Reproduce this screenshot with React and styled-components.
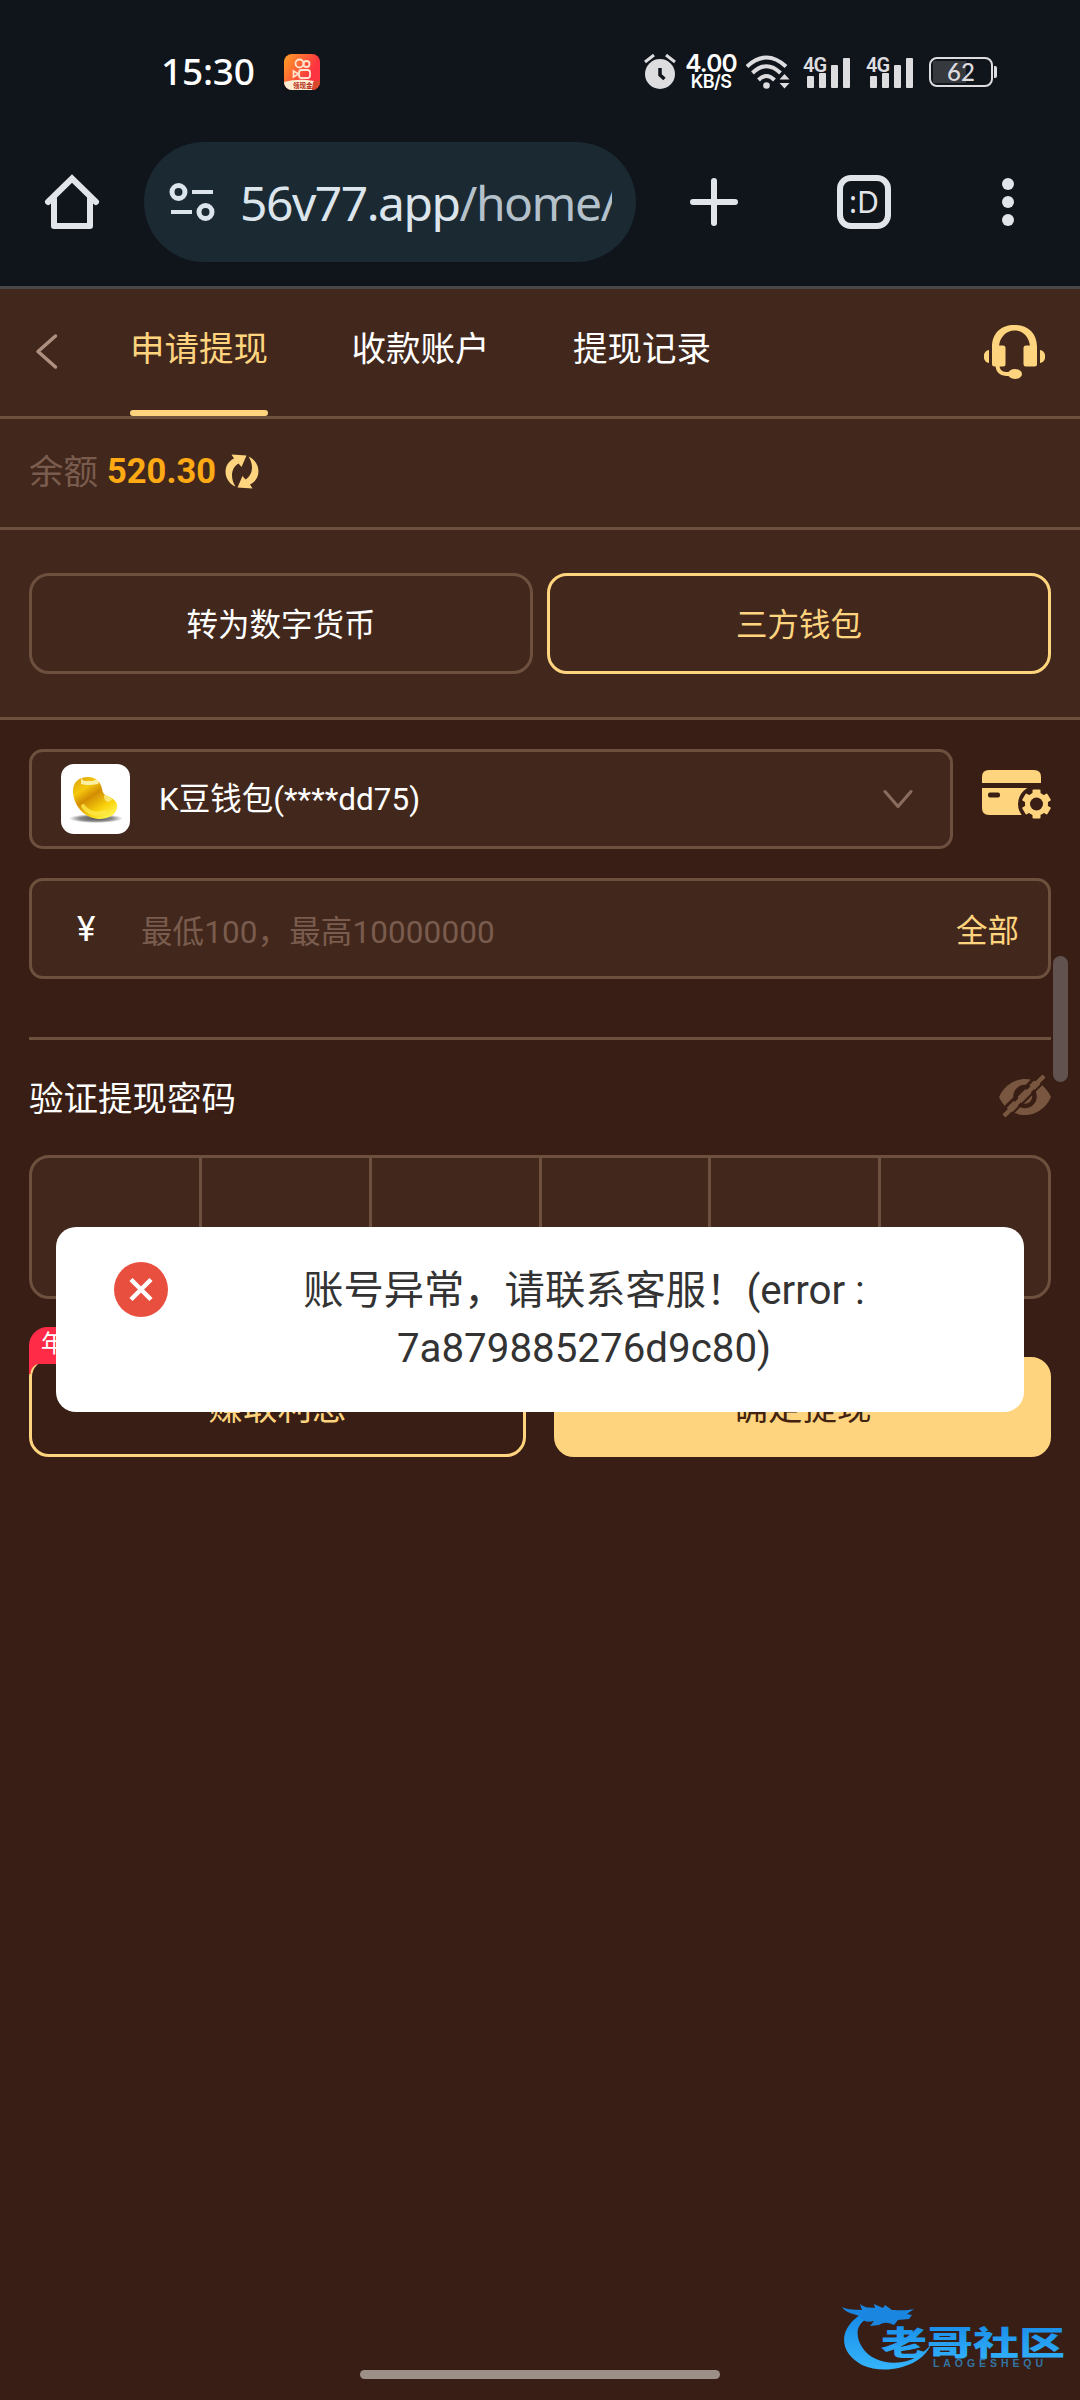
import React, { useState } from "react";
import styled, { createGlobalStyle, css } from "styled-components";

const colorPage = "#381e14";
const colorPanel = "#42281c";
const colorLine = "#6e503f";
const colorGold = "#ffd47f";
const colorMuted = "#7a5c4e";
const colorChrome = "#10141b";
const colorIcon = "#e1e5e9";

const GlobalStyle = createGlobalStyle`
  * {
    box-sizing: border-box;
  }
  body {
    margin: 0;
    background: ${colorPage};
    font-family: Roboto, "Noto Sans CJK SC", sans-serif;
    color: #fff;
  }
  svg {
    display: block;
    flex-shrink: 0;
  }
  button, input {
    font: inherit;
    color: inherit;
    background: none;
    border: none;
    padding: 0;
    margin: 0;
    outline: none;
  }
`;

const Screen = styled.div`
  position: relative;
  width: 1080px;
  height: 2400px;
  overflow: hidden;
  background: ${colorPage};
`;

/* status bar */

const StatusBar = styled.div`
  display: flex;
  align-items: center;
  height: 142px;
  padding: 2px 83px 0 161px;
  background: ${colorChrome};
  font-family: "Noto Sans", sans-serif;
`;

const Clock = styled.span`
  width: 123px;
  padding-bottom: 3px;
  font-size: 37px;
  font-weight: 500;
  letter-spacing: -0.2px;
`;

const StatusIcons = styled.div`
  display: flex;
  align-items: center;
  margin-left: auto;
`;

const NetSpeed = styled.div`
  width: 52px;
  margin: 0 9px 0 9px;
  font-family: Inter, sans-serif;
  text-align: center;
  font-weight: 600;
  font-size: 24.5px;
  line-height: 19px;
  letter-spacing: -0.8px;
  white-space: nowrap;
`;

const NetUnit = styled.div`
  font-size: 18px;
  line-height: 18px;
  letter-spacing: -0.6px;
`;

const Signal = styled.div`
  display: flex;
  align-items: flex-end;
  position: relative;
  gap: 5px;
  width: 47px;
  height: 32px;
  padding-left: 4px;
  margin-right: 16px;
`;

const SignalType = styled.span`
  position: absolute;
  left: 0;
  top: -1px;
  font-family: Roboto, sans-serif;
  font-size: 20px;
  line-height: 20px;
  font-weight: 600;
  letter-spacing: -1px;
  color: #dddde0;
`;

const SignalBar = styled.i`
  width: 7px;
  height: ${props => props.$height}px;
  border-radius: 1px;
  background: #dddde0;
`;

const Battery = styled.div`
  width: 64px;
  height: 30px;
  padding: 3px;
  border: 2px solid #dddde0;
  border-radius: 8px;
  background: linear-gradient(#36393d, #36393d) 2px 2px / 33px 22px no-repeat;
  font-family: Lato, sans-serif;
  font-size: 24px;
  font-weight: 500;
  line-height: 20px;
  text-align: center;
  color: #dddde0;
`;

const BatteryTip = styled.div`
  width: 3px;
  height: 12px;
  margin-left: 1px;
  border-radius: 0 2px 2px 0;
  background: #dddde0;
`;

/* browser toolbar */

const BrowserBar = styled.div`
  display: flex;
  align-items: center;
  height: 147px;
  padding: 0 66px 24px 42px;
  background: ${colorChrome};
  border-bottom: 3px solid #49464a;
`;

const AddressBar = styled.div`
  display: flex;
  align-items: center;
  width: 492px;
  height: 120px;
  margin: 0 51px 0 42px;
  padding: 0 24px 0 25px;
  border-radius: 60px;
  background: #1b2932;
`;

const Url = styled.div`
  flex: 1;
  margin-left: 25px;
  overflow: hidden;
  white-space: nowrap;
  font-family: "Noto Sans", sans-serif;
  font-size: 48px;
  letter-spacing: -1.5px;
  color: #dce5ec;
`;

const UrlPath = styled.span`
  color: #b4c1cb;
`;

const TabCount = styled.div`
  display: flex;
  align-items: center;
  justify-content: center;
  width: 54px;
  height: 54px;
  margin: 0 111px 0 96px;
  border: 6px solid ${colorIcon};
  border-radius: 14px;
  font-family: "Noto Sans", sans-serif;
  font-size: 30px;
  line-height: 30px;
  color: ${colorIcon};
`;

/* page */

const PageHeader = styled.header`
  display: flex;
  align-items: center;
  height: 130px;
  padding: 0 35px 2px 35px;
  background: ${colorPanel};
  border-bottom: 3px solid ${colorLine};
`;

const Tabs = styled.nav`
  display: flex;
  align-self: stretch;
  gap: 83.5px;
  margin: 0 auto -2px 71px;
`;

const Tab = styled.button`
  display: flex;
  flex-direction: column;
  justify-content: space-between;
  padding-top: 35px;
  font-size: 34.5px;
  line-height: 50px;
  color: #fff;

  ${props => props.$active && css`
    color: ${colorGold};

    &::after {
      content: "";
      width: 100%;
      height: 6px;
      border-radius: 3px;
      background: ${colorGold};
    }
  `}
`;

const Balance = styled.section`
  display: flex;
  align-items: center;
  height: 111px;
  padding: 0 29px 3px;
  background: ${colorPanel};
  border-bottom: 3px solid ${colorLine};
  font-size: 34.5px;
  color: ${colorMuted};
`;

const BalanceLabel = styled.span`
  padding-bottom: 5px;
`;

const Amount = styled.b`
  margin: 0 9px 0 9px;
  padding-bottom: 1px;
  font-size: 34.5px;
  font-weight: 700;
  color: #ffaa14;
`;

const WalletTypes = styled.section`
  display: grid;
  grid-template-columns: 1fr 1fr;
  gap: 14px;
  padding: 43px 29px;
  background: ${colorPanel};
  border-bottom: 3px solid ${colorLine};
`;

const WalletType = styled.button`
  height: 101px;
  padding-bottom: 4px;
  border: 3px solid ${props => (props.$active ? colorGold : colorLine)};
  border-radius: 20px;
  font-size: 31.5px;
  color: ${props => (props.$active ? colorGold : "#fff")};
`;

const Form = styled.main`
  padding: 29px 29px 0;
`;

const WalletRow = styled.div`
  display: flex;
  align-items: center;
  margin-bottom: 29px;
`;

const Field = styled.div`
  display: flex;
  align-items: center;
  flex: 1;
  height: ${props => props.$height || 101}px;
  border: 3px solid ${colorLine};
  border-radius: 14px;
  background: ${colorPanel};
  font-size: 31.5px;
`;

const WalletLogo = styled.div`
  width: 69px;
  height: 70px;
  margin: 0 29px;
  border-radius: 13px;
  background: #fff;
`;

const WalletName = styled.span`
  flex: 1;
  padding-bottom: 6px;
`;

const CardButton = styled.button`
  margin: -9px 0 0 29px;
`;

const Currency = styled.span`
  width: 64px;
  margin-left: 45px;
  padding-top: 2px;
  font-size: 35px;
`;

const AmountInput = styled.input`
  flex: 1;
  height: 60px;
  padding-top: 7px;

  &::placeholder {
    color: ${colorMuted};
    letter-spacing: 0.1px;
    opacity: 1;
  }
`;

const AllButton = styled.button`
  margin-right: 29px;
  padding-bottom: 2px;
  color: ${colorGold};
`;

const Divider = styled.hr`
  height: 3px;
  margin: 58px 0 0;
  border: none;
  background: ${colorLine};
`;

const PasswordLabel = styled.div`
  display: flex;
  align-items: center;
  justify-content: space-between;
  height: 115px;
  padding-bottom: 4px;
  font-size: 34.5px;
`;

const PasswordBox = styled.div`
  display: grid;
  grid-template-columns: 170px 170px 170px 169px 170px 1fr;
  height: 144px;
  border: 3px solid ${colorLine};
  border-radius: 20px;
  background: ${colorPanel};
`;

const PasswordCell = styled.div`
  border-right: 3px solid ${colorLine};

  &:last-child {
    border-right: none;
  }
`;

const Actions = styled.div`
  display: grid;
  grid-template-columns: 1fr 1fr;
  gap: 28px;
  margin-top: 58px;
`;

const ActionButton = styled.button`
  position: relative;
  height: 100px;
  padding-bottom: 5px;
  border-radius: 20px;
  font-size: 34.5px;
  border: 3px solid ${colorGold};
  color: ${props => (props.$primary ? "#43230f" : colorGold)};
  background: ${props => (props.$primary ? colorGold : "transparent")};
`;

const RateBadge = styled.span`
  position: absolute;
  left: -3px;
  top: -33px;
  height: 37px;
  padding: 0 12px;
  border-radius: 20px 20px 20px 0;
  background: #ff2b47;
  color: #fff;
  font-size: 24px;
  line-height: 34px;

  &::after {
    content: "";
    position: absolute;
    left: 0;
    top: 37px;
    width: 12px;
    height: 10px;
    background: radial-gradient(circle at 100% 100%, transparent 10px, #ff2b47 11px);
  }
`;

/* overlays */

const Toast = styled.div`
  position: absolute;
  left: 56px;
  top: 1227px;
  display: flex;
  width: 968px;
  height: 185px;
  padding: 35px 58px;
  border-radius: 20px;
  background: #fff;
  color: #333;
`;

const ToastText = styled.p`
  flex: 1;
  margin: 0;
  padding-left: 34px;
  font-size: 40.3px;
  line-height: 57.5px;
  text-align: center;
`;

const ScrollThumb = styled.div`
  position: absolute;
  right: 12px;
  top: 956px;
  width: 15px;
  height: 126px;
  border-radius: 8px;
  background: #615250;
`;

const HomeIndicator = styled.div`
  position: absolute;
  left: 360px;
  bottom: 21px;
  width: 360px;
  height: 9px;
  border-radius: 5px;
  background: #9b8f88;
`;

const Watermark = styled.div`
  position: absolute;
  right: 12px;
  bottom: 22px;
`;

const AppBadge = () => (
  <svg width="36" height="36" viewBox="0 0 36 36">
    <defs>
      <linearGradient id="app" x1="0" y1="0" x2="1" y2="0.6">
        <stop offset="0" stopColor="#ffa126" />
        <stop offset="0.8" stopColor="#fc3340" />
      </linearGradient>
      <clipPath id="appClip"><rect width="36" height="36" rx="8" /></clipPath>
    </defs>
    <g clipPath="url(#appClip)">
      <rect width="36" height="36" fill="url(#app)" />
      <path d="M0 28q14-4 30-1l-2 9H0z" fill="#ffecd2" />
      <path d="M29 28l7-2v10h-8z" fill="#d94a2b" />
      <g fill="none" stroke="#ffe3ce" strokeWidth="1.8">
        <circle cx="15.5" cy="9.500" r="4" />
        <circle cx="22.500" cy="10" r="3" />
        <rect x="15" y="16" width="11" height="8" rx="2.500" />
        <path d="M9.500 17v6l5-3z" />
      </g>
      <text x="9" y="34" fontSize="6.500" fontWeight="700" fill="#b32a16" fontFamily="Noto Sans CJK SC">领现金</text>
    </g>
  </svg>
);

const AlarmIcon = () => (
  <svg width="32" height="36" viewBox="0 0 32 36" fill="#dddde0">
    <circle cx="16" cy="20" r="15" />
    <path d="M1 8l9-7M31 8l-9-7" stroke="#dddde0" strokeWidth="3" />
    <path d="M16 14v7l4.500 4" stroke={colorChrome} strokeWidth="3.500" fill="none" />
  </svg>
);

const WifiIcon = () => (
  <svg width="44" height="34" viewBox="0 0 44 34">
    <g fill="none" stroke="#dddde0" strokeWidth="4">
      <path d="M1 11.500Q20.500-6.500 40 11.500" />
      <path d="M6.500 18Q20.500 4.500 34.500 18" />
      <path d="M12.500 25Q20.500 17 28.500 25" />
    </g>
    <circle cx="20.500" cy="30.500" r="3.300" fill="#dddde0" />
    <path d="M33.500 24.500l5-5.500 5 5.500zM33.500 28h10l-5 5.500z" fill="#dddde0" />
  </svg>
);

const HomeIcon = () => (
  <svg width="60" height="60" viewBox="0 0 60 60" fill="none" stroke={colorIcon} strokeWidth="6" strokeLinecap="round" strokeLinejoin="round">
    <path d="M6 30L30 6.500 54 30" strokeLinejoin="miter" />
    <path d="M12 27v27h36V27" />
  </svg>
);

const SiteInfoIcon = () => (
  <svg width="46" height="40" viewBox="0 0 46 40" fill="none" stroke="#dce5ec">
    <circle cx="9.500" cy="10" r="6.500" strokeWidth="5" />
    <circle cx="36.500" cy="30" r="6.500" strokeWidth="5" />
    <path d="M23 10h21M2 30h21" strokeWidth="4" />
  </svg>
);

const PlusIcon = () => (
  <svg width="54" height="54" viewBox="0 0 54 54" stroke={colorIcon} strokeWidth="6" strokeLinecap="round">
    <path d="M27 6v42M6 27h42" />
  </svg>
);

const MenuIcon = () => (
  <svg width="12" height="50" viewBox="0 0 12 50" fill={colorIcon}>
    <circle cx="6" cy="7" r="6" />
    <circle cx="6" cy="25" r="6" />
    <circle cx="6" cy="43" r="6" />
  </svg>
);

const BackIcon = () => (
  <svg width="24" height="38" viewBox="0 0 24 38" fill="none" stroke="#af9080" strokeWidth="3.500" strokeLinecap="round" strokeLinejoin="round">
    <path d="M20.500 3L3 18.500l17.500 15.500" />
  </svg>
);

const HeadsetIcon = () => (
  <svg width="61" height="54" viewBox="0 0 61 54" fill={colorGold}>
    <path d="M8 27V22C8 8 17 0 30.500 0S53 8 53 22v5h-6v-6h-1C45 12 39 5.500 30.500 5.500S16 12 15 21h-1v6z" />
    <rect x="8" y="20.500" width="13.500" height="21" rx="2.500" />
    <rect x="39.500" y="20.500" width="13.500" height="21" rx="2.500" />
    <path d="M5 25v13c-7-1-7-12 0-13zM56 25v13c7-1 7-12 0-13z" />
    <path d="M13.500 40c0 6 4 9 8.500 9h6" fill="none" stroke={colorGold} strokeWidth="4" />
    <ellipse cx="31" cy="49" rx="7" ry="5" />
  </svg>
);

const RefreshIcon = () => (
  <svg width="34" height="35" viewBox="0 0 34 35" fill={colorGold}>
    <path id="refreshArrow" d="M6.500 0.500L21.500 1.500 16.500 13 13.500 9.500C6 14 5 24 10.500 32.500-2 27-3 10 9 4.500z" />
    <use href="#refreshArrow" transform="rotate(180 17 17.500)" />
  </svg>
);

const BeanIcon = () => (
  <svg width="69" height="70" viewBox="0 0 69 70">
    <defs>
      <linearGradient id="bean" x1="0" y1="0" x2="0.7" y2="1">
        <stop offset="0" stopColor="#d99c08" />
        <stop offset="0.3" stopColor="#f6c80d" />
        <stop offset="0.5" stopColor="#d38d04" />
        <stop offset="0.8" stopColor="#f9d20c" />
        <stop offset="1" stopColor="#fff14a" />
      </linearGradient>
      <radialGradient id="beanShadow">
        <stop offset="0" stopColor="#555" />
        <stop offset="0.6" stopColor="#888" />
        <stop offset="1" stopColor="#fff" />
      </radialGradient>
    </defs>
    <ellipse cx="35" cy="54.500" rx="27" ry="4.500" fill="url(#beanShadow)" />
    <path d="M12 27c0-9 6-14 15-14 8 0 13 5 14 12 1 6 4 6 8 8 5 3 8 6 7 11-1 7-9 11-18 11-16-1-26-15-26-28z" fill="url(#bean)" />
    <path d="M20 14l3 3h9l4-2c2 2 2 3 1 5l-7 1h-5l-5-1z" fill="#fff7bd" opacity="0.85" />
    <path d="M43 31c4 0 7 1 8 5l-4 2c-3-1-4-3-4-7z" fill="#fff6a0" opacity="0.7" />
    <path d="M22 42c6 8 14 9 22 6" stroke="#ffe84a" strokeWidth="4" fill="none" opacity="0.8" strokeLinecap="round" />
  </svg>
);

const ArrowDown = styled.svg`
  margin-right: 37px;
`;

const CardSettingsIcon = () => (
  <svg width="69" height="49" viewBox="0 0 69 49">
    <path d="M0 13V7Q0 0 7 0h45q7 0 7 7v6z" fill={colorGold} />
    <path d="M0 18h59v20q0 7-7 7H7q-7 0-7-7z" fill={colorGold} />
    <rect x="6" y="22.500" width="12" height="5" rx="2" fill={colorPage} />
    <circle cx="54.500" cy="34" r="18.500" fill={colorPage} />
    <g transform="translate(54.500 34)" fill={colorGold}>
      {[0, 60, 120].map(angle => (
        <rect key={angle} x="-4" y="-14.500" width="8" height="29" rx="1" transform={`rotate(${angle})`} />
      ))}
      <circle r="11.500" />
      <circle r="6.500" fill={colorPage} />
    </g>
  </svg>
);

const EyeOffIcon = () => (
  <svg width="52" height="44" viewBox="0 0 52 44">
    <path d="M0 23C11-1 41-1 52 23 41 47 11 47 0 23z" fill="#79563f" />
    <circle cx="26" cy="22.500" r="9.500" fill="none" stroke={colorPage} strokeWidth="4.500" />
    <path d="M2.500 37L42-2.500" stroke={colorPage} strokeWidth="3" />
    <path d="M5 42L45 2" stroke="#79563f" strokeWidth="4.500" />
    <path d="M9 44L49 4" stroke={colorPage} strokeWidth="2" />
  </svg>
);

const ErrorIcon = () => (
  <svg width="54" height="55" viewBox="0 0 54 55">
    <ellipse cx="27" cy="27.500" rx="27" ry="27.500" fill="#e94f3f" />
    <path d="M17 17.500l20 20M37 17.500l-20 20" stroke="#fff" strokeWidth="4.500" />
  </svg>
);

const WatermarkLogo = () => (
  <svg width="226" height="78" viewBox="0 0 226 78">
    <defs>
      <linearGradient id="mark" x1="0" y1="0" x2="0" y2="1">
        <stop offset="0" stopColor="#1487e6" />
        <stop offset="1" stopColor="#35b4fb" />
      </linearGradient>
    </defs>
    <path d="M30 9C-2 21-8 50 20 65c25 11 61 1 69-21-3 4-5 6-8 8C66 67 32 67 20 47 9 29 20 16 38 16z" fill="url(#mark)" />
    <path d="M0 7c8 4 14 2 20 3l-2-6c6 5 10 3 15 4l-1-4 9 4 2-3 7 5c8 0 13 1 22-1l-7 5 5 1-3 4-11 1-4 5c-7-3-10-3-15 0l-9 1 4-5c-7 2-11 0-15-5C10 13 4 13 0 7z" fill="#1a86e0" />
    <text x="39" y="55" textLength="184" lengthAdjust="spacingAndGlyphs" fontSize="33" fontWeight="900" fontFamily="Noto Sans CJK SC" fill="url(#mark)">老哥社区</text>
    <text x="91" y="67" textLength="110" fontSize="10.500" fontWeight="700" fontFamily="Liberation Sans" fill="#3474a2">LAOGESHEQU</text>
  </svg>
);

const SignalStrength = () => (
  <Signal>
    <SignalType>4G</SignalType>
    {[12, 15, 23, 30].map(height => <SignalBar key={height} $height={height} />)}
  </Signal>
);

const tabs = ["申请提现", "收款账户", "提现记录"];
const walletTypes = ["转为数字货币", "三方钱包"];

const App = () => {
  const [tab, setTab] = useState(0);
  const [type, setType] = useState(1);
  const [amount, setAmount] = useState("");

  return (
    <Screen>
      <GlobalStyle />

      <StatusBar>
        <Clock>15:30</Clock>
        <AppBadge />
        <StatusIcons>
          <AlarmIcon />
          <NetSpeed>
            4.00
            <NetUnit>KB/S</NetUnit>
          </NetSpeed>
          <WifiIcon />
          <svg width="13" height="1" />
          <SignalStrength />
          <SignalStrength />
          <Battery>62</Battery>
          <BatteryTip />
        </StatusIcons>
      </StatusBar>

      <BrowserBar>
        <HomeIcon />
        <AddressBar>
          <SiteInfoIcon />
          <Url>56v77.app<UrlPath>/home/</UrlPath></Url>
        </AddressBar>
        <PlusIcon />
        <TabCount>:D</TabCount>
        <MenuIcon />
      </BrowserBar>

      <PageHeader>
        <BackIcon />
        <Tabs>
          {tabs.map((name, i) => (
            <Tab key={name} $active={i === tab} onClick={() => setTab(i)}>{name}</Tab>
          ))}
        </Tabs>
        <HeadsetIcon />
      </PageHeader>

      <Balance>
        <BalanceLabel>余额</BalanceLabel>
        <Amount>520.30</Amount>
        <RefreshIcon />
      </Balance>

      <WalletTypes>
        {walletTypes.map((name, i) => (
          <WalletType key={name} $active={i === type} onClick={() => setType(i)}>{name}</WalletType>
        ))}
      </WalletTypes>

      <Form>
        <WalletRow>
          <Field $height={100}>
            <WalletLogo><BeanIcon /></WalletLogo>
            <WalletName>K豆钱包(****dd75)</WalletName>
            <ArrowDown width="30" height="20" viewBox="0 0 30 20" fill="none" stroke="#8b6d5f" strokeWidth="3" strokeLinecap="round" strokeLinejoin="round">
              <path d="M2 2.500l13 15 13-15" />
            </ArrowDown>
          </Field>
          <CardButton><CardSettingsIcon /></CardButton>
        </WalletRow>

        <Field>
          <Currency>¥</Currency>
          <AmountInput
            placeholder="最低100，最高10000000"
            value={amount}
            onChange={e => setAmount(e.target.value)}
          />
          <AllButton>全部</AllButton>
        </Field>

        <Divider />

        <PasswordLabel>
          验证提现密码
          <EyeOffIcon />
        </PasswordLabel>
        <PasswordBox>
          {[1, 2, 3, 4, 5, 6].map(n => <PasswordCell key={n} />)}
        </PasswordBox>

        <Actions>
          <ActionButton>
            <RateBadge>年利率</RateBadge>
            赚取利息
          </ActionButton>
          <ActionButton $primary>确定提现</ActionButton>
        </Actions>
      </Form>

      <ScrollThumb />

      <Toast>
        <ErrorIcon />
        <ToastText>
          账号异常，请联系客服！(error :<br />
          7a879885276d9c80)
        </ToastText>
      </Toast>

      <Watermark><WatermarkLogo /></Watermark>
      <HomeIndicator />
    </Screen>
  );
};

export default App;
